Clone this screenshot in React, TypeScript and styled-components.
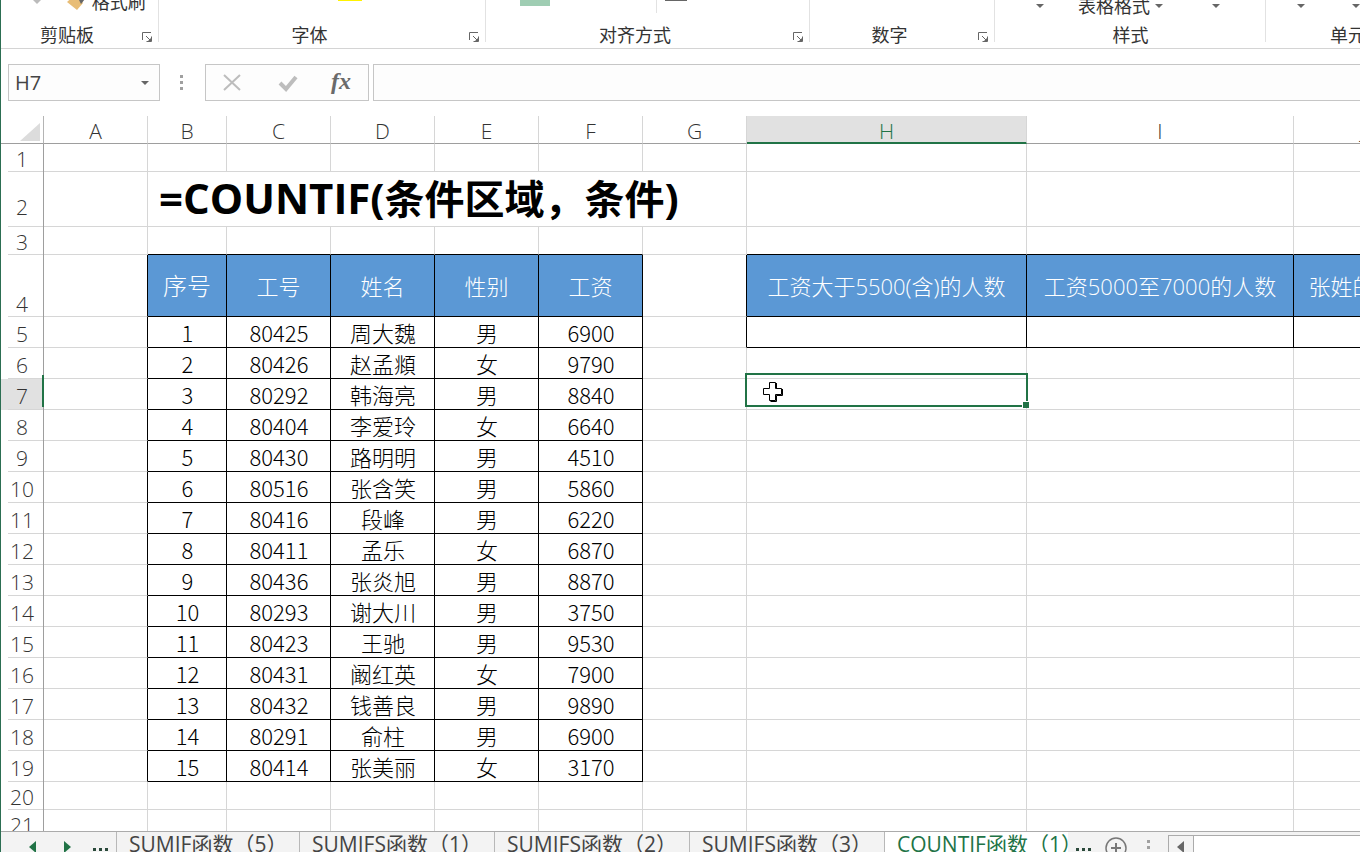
import React from "react";
import styled, { createGlobalStyle, css } from "styled-components";

const GREEN = "#217346";
const LINE = "#d6d6d6";
const UI = `"Open Sans", "Noto Sans CJK SC", sans-serif`;
const SHEET = `"Noto Sans CJK SC", "Noto Sans", sans-serif`;

const GlobalStyle = createGlobalStyle`
  * { box-sizing: border-box; }
  html, body, #root { height: 100%; }
  body { margin: 0; background: #fff; font-family: ${UI}; overflow: hidden; }
  button, input { font: inherit; color: inherit; margin: 0; padding: 0; border: 0; background: none; }
`;

const Window = styled.div`
  display: flex;
  flex-direction: column;
  height: 100vh;
  overflow: hidden;
  border-left: 1px solid #2c6e52;
`;

/* Ribbon */
const Ribbon = styled.div`
  display: flex;
  flex: none;
  height: 49px;
  overflow: hidden;
  border-bottom: 1px solid #d4d4d4;
`;

const Group = styled.section<{ $w: number }>`
  flex: 0 0 ${(p) => p.$w}px;
  display: flex;
  flex-direction: column;
  justify-content: flex-end;
  height: 48px;
  background: linear-gradient(#e2e2e2, #e2e2e2) 100% 0 / 1px 42px no-repeat;
`;

const Tools = styled.div<{ $start: number }>`
  display: flex;
  align-items: flex-end;
  flex: 1;
  min-height: 0;
  padding-left: ${(p) => p.$start}px;
`;

const Tool = styled.button<{ $gap?: number; $raised?: boolean }>`
  display: flex;
  align-items: center;
  flex: none;
  height: 24px;
  margin-left: ${(p) => p.$gap ?? 0}px;
  margin-bottom: ${(p) => (p.$raised ? 8 : 4)}px;
  font-size: 18px;
  line-height: 24px;
  white-space: nowrap;
  color: #333;
`;

const Swatch = styled.i<{ $w: number; $h: number; $c: string; $gap?: number }>`
  flex: none;
  align-self: flex-start;
  width: ${(p) => p.$w}px;
  height: ${(p) => p.$h}px;
  margin-left: ${(p) => p.$gap ?? 0}px;
  background: ${(p) => p.$c};
`;

const GroupFooter = styled.div<{ $launch?: boolean }>`
  display: flex;
  flex: none;
  align-items: center;
  height: 26px;
  padding-right: ${(p) => (p.$launch ? 4 : 0)}px;
`;

const GroupName = styled.span<{ $launch?: boolean }>`
  flex: 1;
  padding-right: ${(p) => (p.$launch ? 6 : 0)}px;
  text-align: center;
  font-size: 18px;
  line-height: 26px;
  white-space: nowrap;
  color: #333;
`;

const Launcher = styled.button`
  display: flex;
  width: 16px;
  height: 16px;
  margin-top: 4px;
  align-items: center;
  justify-content: center;
  color: #666;
`;

/* Formula bar */
const FormulaBar = styled.div`
  display: flex;
  flex: none;
  height: 37px;
  margin: 15px 0 15px 7px;
`;

const Box = styled.div`
  display: flex;
  align-items: center;
  border: 1px solid #c6c6c6;
  background: #fdfdfd;
`;

const NameBox = styled(Box)`
  width: 152px;
  padding: 0 10px 0 6px;
`;

const NameInput = styled.input`
  flex: 1;
  min-width: 0;
  font-size: 20px;
  color: #444;
  outline: none;
`;

const IconButton = styled.button<{ $left?: number; $top?: number }>`
  display: flex;
  align-items: center;
  justify-content: center;
  margin-left: ${(p) => p.$left ?? 0}px;
  margin-top: ${(p) => p.$top ?? 0}px;
`;

const Grip = styled.div`
  display: flex;
  align-items: center;
  justify-content: center;
  width: 45px;
  padding-right: 2px;
`;

const Actions = styled(Box)`
  width: 164px;
  padding: 0 17px 0 14px;
  justify-content: space-between;
`;

const FormulaField = styled(Box)`
  flex: 1;
  min-width: 0;
  margin-left: 4px;
  border-right: 0;
`;

const FormulaInput = styled.input`
  flex: 1;
  padding: 0 8px;
  font-size: 20px;
  outline: none;
`;

const Fx = styled.span`
  padding-bottom: 4px;
  font: italic bold 24px/24px "Liberation Serif", serif;
  color: #6a6a6a;
`;

/* Sheet */
const SheetArea = styled.main`
  position: relative;
  flex: 1;
  min-height: 0;
  overflow: hidden;
`;

const Grid = styled.table`
  width: 100%;
  min-width: 1434px;
  table-layout: fixed;
  border-collapse: separate;
  border-spacing: 0;
`;

const Col = styled.col<{ $w?: number }>`
  width: ${(p) => (p.$w ? `${p.$w}px` : "auto")};
`;

const Row = styled.tr<{ $h: number }>`
  height: ${(p) => p.$h}px;
`;

const ColHead = styled.th<{ $on?: boolean }>`
  padding: 3px 0 0;
  border-right: 1px solid ${LINE};
  border-bottom: 1px solid #9e9e9e;
  font: 300 21px/24px ${UI};
  color: #333;
  ${(p) =>
    p.$on &&
    css`
      padding-top: 4px;
      background: #e1e1e1;
      border-bottom: 2px solid ${GREEN};
      color: ${GREEN};
      line-height: 22px;
    `}
`;

const Corner = styled.th`
  padding: 0 3px 2px 0;
  border-right: 1px solid #b4b4b4;
  border-bottom: 1px solid #9e9e9e;
  text-align: right;
  vertical-align: bottom;
  svg { display: block; margin-left: auto; }
`;

const RowHead = styled.th<{ $on?: boolean; $lift: number }>`
  position: relative;
  padding: 0 0 ${(p) => p.$lift}px 0;
  border-right: 1px solid #9e9e9e;
  vertical-align: bottom;
  font: 300 21px/24px ${UI};
  color: #333;
  background: linear-gradient(${LINE}, ${LINE}) 7px 100% / 100% 1px no-repeat ${(p) => (p.$on ? "#e1e1e1" : "#fff")};
`;

const RowMark = styled.i`
  position: absolute;
  right: -1px;
  top: -4px;
  width: 2px;
  height: 32px;
  background: ${GREEN};
`;

const Cell = styled.td<{ $r: string; $b: string; $head?: boolean; $big?: boolean }>`
  padding: 0 0 1px 1px;
  border-right: 1px solid ${(p) => p.$r};
  border-bottom: 1px solid ${(p) => p.$b};
  font: 300 22px/26px ${SHEET};
  text-align: center;
  white-space: nowrap;
  color: #000;
  ${(p) =>
    p.$head &&
    css`
      padding: 0;
      font-family: ${UI};
      font-size: ${p.$big ? 24 : 22}px;
      background: #5b98d5;
      color: #fff;
    `}
`;

const TitleCell = styled(Cell)`
  padding: 0 0 4px 11px;
  text-align: left;
  font: 700 40px/50px ${SHEET};
  color: #000;
`;

const Latin = styled.span`
  font-family: "Open Sans", sans-serif;
  font-size: 42px;
  line-height: 1px;
`;

const Selection = styled.div`
  position: absolute;
  left: 744px;
  top: 257px;
  width: 283px;
  height: 34px;
  border: 2px solid ${GREEN};
`;

const FillHandle = styled.i`
  position: absolute;
  right: -3px;
  bottom: -3px;
  width: 7px;
  height: 7px;
  border: solid #fff;
  border-width: 1px 0 0 1px;
  background: ${GREEN};
`;

const Pointer = styled.svg`
  position: absolute;
  left: 15px;
  top: 6px;
`;

/* Sheet tabs */
const TabBar = styled.footer`
  display: flex;
  flex: none;
  height: 21px;
  overflow: hidden;
  border-top: 1px solid #ababab;
  background: #f3f3f3;
`;

const TabNav = styled.div`
  display: flex;
  align-items: flex-start;
  flex: none;
  gap: 22px;
  width: 115px;
  padding: 9px 0 0 28px;
`;

const Tab = styled.button<{ $w: number; $on?: boolean }>`
  flex: 0 0 ${(p) => p.$w}px;
  min-width: 0;
  height: 24px;
  padding-left: 12px;
  border-left: 1px solid #b8b8b8;
  text-align: left;
  font-size: 21px;
  line-height: 24px;
  white-space: nowrap;
  color: #444;
  ${(p) =>
    p.$on &&
    css`
      height: 25px;
      margin-top: -1px;
      padding-top: 1px;
      background: #fff;
      color: ${GREEN};
    `}
`;

const TabTools = styled.div`
  display: flex;
  align-items: flex-start;
  flex: none;
  gap: 12px;
  width: 100px;
  padding: 4px 0 0 8px;
`;

const Scroller = styled.div`
  display: flex;
  flex: 1;
  height: 28px;
  margin-top: 3px;
  border: solid #ababab;
  border-width: 1px 0 0 1px;
  background: #fff;
`;

const ScrollButton = styled.button`
  display: flex;
  width: 25px;
  padding: 5px 0 0 8px;
  border-right: 1px solid #ababab;
  background: #f3f3f3;
`;

const Caret = ({ color = "#666" }: { color?: string }) => (
  <svg width="8" height="4" viewBox="0 0 8 4" aria-hidden="true">
    <path d="M0 0h8L4 4z" fill={color} />
  </svg>
);

const Arrow = ({ left, color }: { left?: boolean; color: string }) => (
  <svg width="7" height="12" viewBox="0 0 7 12" aria-hidden="true">
    <path d={left ? "M7 0v12L0 6z" : "M0 0v12l7-6z"} fill={color} />
  </svg>
);

const Dots = () => (
  <svg width="16" height="12" viewBox="0 0 16 12" aria-hidden="true">
    <path d="M0 7h3v3H0zM6 7h3v3H6zM12 7h3v3h-3z" fill="#2b4a3b" />
  </svg>
);

const VDots = () => (
  <svg width="4" height="16" viewBox="0 0 4 16" aria-hidden="true">
    <path d="M0 0h3v3H0zM0 6h3v3H0zM0 12h3v3H0z" fill="#a0a0a0" />
  </svg>
);

const TabGrip = styled.span`
  display: flex;
  padding: 4px 0 0 7px;
`;

const Launch = () => (
  <Launcher aria-label="更多选项">
    <svg width="10" height="10" viewBox="0 0 10 10" fill="none" stroke="currentColor" aria-hidden="true">
      <path d="M.5 8V.5H9M4 4l4 4M9.5 4.5v5h-5" />
      <path d="M9 6v3H6z" fill="currentColor" stroke="none" />
    </svg>
  </Launcher>
);

const names = ["周大魏", "赵孟頫", "韩海亮", "李爱玲", "路明明", "张含笑", "段峰", "孟乐", "张炎旭", "谢大川", "王驰", "阚红英", "钱善良", "俞柱", "张美丽"];
const ids = [80425, 80426, 80292, 80404, 80430, 80516, 80416, 80411, 80436, 80293, 80423, 80431, 80432, 80291, 80414];
const sexes = "男女男女男男男女男男男女男男女".split("");
const pay = [6900, 9790, 8840, 6640, 4510, 5860, 6220, 6870, 8870, 3750, 9530, 7900, 9890, 6900, 3170];

const columns = "ABCDEFGHIJK".split("");
const widths = [104, 79, 104, 104, 104, 104, 104, 280, 267, 140];
const left = ["序号", "工号", "姓名", "性别", "工资"];
const right = ["工资大于5500(含)的人数", "工资5000至7000的人数", "张姓的人数"];
const rows = Array.from({ length: 21 }, (_, i) => i + 1);

const heightOf = (r: number) => (r === 2 ? 55 : r === 4 ? 62 : r < 4 || r > 19 ? 28 : 31);

const inTable = (r: number, c: number) =>
  (c >= 1 && c <= 5 && r >= 4 && r <= 19) || (c >= 7 && c <= 9 && (r === 4 || r === 5));

function valueOf(r: number, c: number): React.ReactNode {
  if (r === 4) return c >= 7 ? right[c - 7] : left[c - 1];
  if (c >= 1 && c <= 5 && r >= 5 && r <= 19) {
    const i = r - 5;
    return [i + 1, ids[i], names[i], sexes[i], pay[i]][c - 1];
  }
  return null;
}

function SheetRow({ r }: { r: number }) {
  return (
    <Row $h={heightOf(r)}>
      <RowHead scope="row" $on={r === 7} $lift={r === 2 ? 8 : r > 4 && r < 20 ? 2 : 1}>
        {r}
        {r === 7 && <RowMark />}
      </RowHead>
      {columns.map((name, c) => {
        if (r === 2 && c > 1 && c < 7) return null;
        if (r === 2 && c === 1)
          return (
            <TitleCell key={name} colSpan={6} $r={LINE} $b={LINE}>
              <Latin>=COUNTIF(</Latin>条件区域，条件<Latin>)</Latin>
            </TitleCell>
          );
        const own = inTable(r, c);
        return (
          <Cell
            key={name}
            $head={own && r === 4}
            $big={r === 4 && c === 1}
            $r={own || inTable(r, c + 1) ? "#000" : LINE}
            $b={own || inTable(r + 1, c) ? "#000" : LINE}
          >
            {valueOf(r, c)}
          </Cell>
        );
      })}
    </Row>
  );
}

export default function App() {
  return (
    <Window>
      <GlobalStyle />
      <Ribbon>
        <Group $w={158}>
          <Tools $start={32}>
            <Tool $raised aria-label="粘贴选项"><Caret color="#bbb" /></Tool>
            <Tool $raised $gap={26}>
              <svg width="20" height="20" viewBox="0 0 20 20" aria-hidden="true">
                <path d="M0 10l9-8 7 9-6 7z" fill="#e8bd76" />
                <path d="M8 0h6l4 7-4 5z" fill="#666" />
              </svg>
              &nbsp;格式刷
            </Tool>
          </Tools>
          <GroupFooter $launch><GroupName $launch>剪贴板</GroupName><Launch /></GroupFooter>
        </Group>
        <Group $w={327}>
          <Tools $start={179}><Swatch $w={24} $h={1} $c="#fff200" /></Tools>
          <GroupFooter $launch><GroupName $launch>字体</GroupName><Launch /></GroupFooter>
        </Group>
        <Group $w={324}>
          <Tools $start={34}>
            <Swatch $w={30} $h={6} $c="#9fcdb3" />
            <Swatch $w={1} $h={13} $c="#e2e2e2" $gap={106} />
            <Swatch $w={22} $h={1} $c="#666" $gap={8} />
          </Tools>
          <GroupFooter $launch><GroupName $launch>对齐方式</GroupName><Launch /></GroupFooter>
        </Group>
        <Group $w={185}>
          <Tools $start={0} />
          <GroupFooter $launch><GroupName $launch>数字</GroupName><Launch /></GroupFooter>
        </Group>
        <Group $w={271}>
          <Tools $start={41}>
            <Tool aria-label="条件格式"><Caret /></Tool>
            <Tool $gap={34}>表格格式&nbsp;<Caret /></Tool>
            <Tool $gap={49} aria-label="单元格样式"><Caret /></Tool>
          </Tools>
          <GroupFooter><GroupName>样式</GroupName></GroupFooter>
        </Group>
        <Group $w={182}>
          <Tools $start={31}>
            <Tool aria-label="插入"><Caret /></Tool>
            <Tool $gap={47} aria-label="删除"><Caret /></Tool>
          </Tools>
          <GroupFooter><GroupName>单元格</GroupName></GroupFooter>
        </Group>
      </Ribbon>

      <FormulaBar>
        <NameBox>
          <NameInput aria-label="名称框" defaultValue="H7" />
          <IconButton aria-label="选择名称"><Caret /></IconButton>
        </NameBox>
        <Grip><VDots /></Grip>
        <Actions>
          <IconButton aria-label="取消">
            <svg width="24" height="20" viewBox="0 0 24 20" fill="none" stroke="#bdbdbd" strokeWidth="2" aria-hidden="true">
              <path d="M4 2l16 15M20 2L4 17" />
            </svg>
          </IconButton>
          <IconButton aria-label="输入">
            <svg width="24" height="20" viewBox="0 0 24 20" fill="none" stroke="#bdbdbd" strokeWidth="4" aria-hidden="true">
              <path d="M4 10l6 6L20 4" />
            </svg>
          </IconButton>
          <IconButton aria-label="插入函数"><Fx>fx</Fx></IconButton>
        </Actions>
        <FormulaField><FormulaInput aria-label="编辑栏" /></FormulaField>
      </FormulaBar>

      <SheetArea>
        <Grid>
          <colgroup>
            <Col $w={43} />
            {columns.map((name, i) => <Col key={name} $w={widths[i]} />)}
          </colgroup>
          <thead>
            <Row $h={28}>
              <Corner>
                <svg width="20" height="18" viewBox="0 0 20 18" aria-hidden="true"><path d="M20 0v18H0z" fill="#dcdcdc" /></svg>
              </Corner>
              {columns.map((name) => <ColHead key={name} scope="col" $on={name === "H"}>{name}</ColHead>)}
            </Row>
          </thead>
          <tbody>{rows.map((r) => <SheetRow key={r} r={r} />)}</tbody>
        </Grid>
        <Selection>
          <FillHandle />
          <Pointer width="22" height="22" viewBox="0 0 22 22" aria-hidden="true">
            <path d="M7.500 1.500h6v6h6v6h-6v6h-6v-6h-6v-6h6z" fill="#fff" stroke="#000" />
            <path d="M14.500 2v5M20.500 8v6.500h-6v6h-6" fill="none" stroke="#000" />
          </Pointer>
        </Selection>
      </SheetArea>

      <TabBar>
        <TabNav>
          <IconButton aria-label="上一个工作表"><Arrow left color={GREEN} /></IconButton>
          <IconButton $left={6} aria-label="下一个工作表"><Arrow color={GREEN} /></IconButton>
          <IconButton aria-label="更多工作表"><Dots /></IconButton>
        </TabNav>
        <Tab $w={183}>SUMIF函数（5）</Tab>
        <Tab $w={195}>SUMIFS函数（1）</Tab>
        <Tab $w={195}>SUMIFS函数（2）</Tab>
        <Tab $w={195}>SUMIFS函数（3）</Tab>
        <Tab $w={184} $on>COUNTIF函数（1）</Tab>
        <TabTools>
          <IconButton $top={5} aria-label="其他工作表"><Dots /></IconButton>
          <IconButton aria-label="新工作表">
            <svg width="24" height="24" viewBox="0 0 24 24" fill="none" stroke="#777" strokeWidth="1.500" aria-hidden="true">
              <circle cx="12" cy="12" r="10" />
              <path d="M12 7v10M7 12h10" strokeWidth="2" />
            </svg>
          </IconButton>
          <TabGrip><VDots /></TabGrip>
        </TabTools>
        <Scroller>
          <ScrollButton aria-label="向左滚动"><Arrow left color="#666" /></ScrollButton>
        </Scroller>
      </TabBar>
    </Window>
  );
}
